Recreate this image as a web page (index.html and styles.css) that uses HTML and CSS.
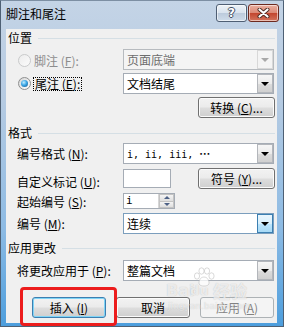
FILE: index.html
```html
<!DOCTYPE html>
<html lang="zh">
<head>
<meta charset="utf-8">
<title>脚注和尾注</title>
<link rel="stylesheet" href="styles.css">
</head>
<body>
<div class="window">
  <div class="titlebar">
    <span class="title">脚注和尾注</span>
    <div class="caption-btns">
      <div class="cbtn help"><span>?</span></div>
      <div class="cbtn close">
        <svg width="13" height="10" viewBox="0 0 13 10"><path d="M2.5 1.5 L10.5 8.5 M10.5 1.5 L2.5 8.5" stroke="#4a2a22" stroke-width="4" stroke-linecap="round"/><path d="M2.5 1.5 L10.5 8.5 M10.5 1.5 L2.5 8.5" stroke="#fff" stroke-width="2.2" stroke-linecap="round"/></svg>
      </div>
    </div>
  </div>
  <div class="client">
    <div class="group g1"><span>位置</span><i class="rule"></i></div>
    <div class="row r1">
      <div class="radio disabled lift1"><span class="rb off"></span><span>脚注 (<u>F</u>):</span></div>
      <div class="combo disabled"><span class="val">页面底端</span><span class="arrow"><i class="tri"></i></span></div>
    </div>
    <div class="row r2">
      <div class="radio"><span class="rb on"></span><span class="focus">尾注 (<u>E</u>):</span></div>
      <div class="combo"><span class="val">文档结尾</span><span class="arrow"><i class="tri"></i></span></div>
    </div>
    <div class="row r3">
      <span></span>
      <div class="btn btn-right">转换 (<u>C</u>)...</div>
    </div>

    <div class="group g2"><span>格式</span><i class="rule"></i></div>
    <div class="row r4">
      <span class="lbl">编号格式 (<u>N</u>):</span>
      <div class="combo"><span class="val mono">i, ii, iii, <span class="dots">…</span></span><span class="arrow"><i class="tri"></i></span></div>
    </div>
    <div class="row r5">
      <span class="lbl lift3">自定义标记 (<u>U</u>):</span>
      <div class="split">
        <div class="textbox"></div>
        <div class="btn sym">符号 (<u>Y</u>)...</div>
      </div>
    </div>
    <div class="row r6">
      <span class="lbl lift1">起始编号 (<u>S</u>):</span>
      <div class="spinner">
        <span class="val">i</span>
        <span class="spin">
          <span class="sbtn"><i class="up"></i></span>
          <span class="sbtn"><i class="down"></i></span>
        </span>
      </div>
    </div>
    <div class="row r7">
      <span class="lbl">编号 (<u>M</u>):</span>
      <div class="combo hot"><span class="val">连续</span><span class="arrow"><i class="tri"></i></span></div>
    </div>

    <div class="group g3"><span>应用更改</span><i class="rule"></i></div>
    <div class="row r8">
      <span class="lbl">将更改应用于 (<u>P</u>):</span>
      <div class="combo"><span class="val">整篇文档</span><span class="arrow"><i class="tri"></i></span></div>
    </div>

    <div class="actions">
      <div class="btn default">插入 (<u>I</u>)</div>
      <div class="btn">取消</div>
      <div class="btn disabled">应用 (<u>A</u>)</div>
    </div>
  </div>

  <div class="annot"></div>
  <div class="watermark">
    <svg class="paw" width="24" height="20" viewBox="0 0 24 20">
      <g fill="rgba(255,255,255,0.75)" stroke="rgba(150,150,150,0.35)" stroke-width="1">
        <ellipse cx="5" cy="9" rx="2.6" ry="3.2"/>
        <ellipse cx="9.5" cy="4" rx="2.6" ry="3.2"/>
        <ellipse cx="15" cy="4" rx="2.6" ry="3.2"/>
        <ellipse cx="19.5" cy="9" rx="2.6" ry="3.2"/>
        <path d="M12 10 C8 10 6 15 7.5 17.5 C9 19.5 15 19.5 16.5 17.5 C18 15 16 10 12 10 Z"/>
      </g>
    </svg>
    <span class="wm-bai">Bai</span><span class="wm-du">du</span><span class="wm-jy">经验</span>
    <span class="wm-url">jingyan.baidu.com</span>
  </div>
</div>
</body>
</html>
```

FILE: styles.css
```css
* { box-sizing: border-box; }

html, body {
  margin: 0;
  padding: 0;
}

body {
  font-family: "Noto Sans CJK SC", "Noto Sans", sans-serif;
  font-size: 12px;
  color: #000;
  background: #fff;
}

u { text-decoration: underline; text-underline-offset: 1px; }

.window {
  position: relative;
  width: 284px;
  height: 327px;
  border: 1px solid #4e6074;
  border-top-color: #7d8fa3;
  background: linear-gradient(#c4d4e6 0%, #b6cbe2 30%, #8dbbe4 70%, #4d9edd 100%);
  display: flex;
  flex-direction: column;
  overflow: hidden;
}

/* title bar */
.titlebar {
  height: 28px;
  flex: none;
  display: flex;
  justify-content: space-between;
  align-items: flex-start;
  padding: 0 4px 0 5px;
}

.title {
  margin-top: 7px;
  line-height: 12px;
  font-size: 12px;
  color: #000;
}

.caption-btns {
  display: flex;
  gap: 1px;
  margin-top: 3px;
}

.cbtn {
  width: 31px;
  height: 18px;
  border: 1px solid #4f5f74;
  border-radius: 3px;
  display: flex;
  align-items: center;
  justify-content: center;
  box-shadow: inset 0 0 0 1px rgba(255,255,255,0.55);
}

.help {
  background: linear-gradient(#edf2f7 0%, #d9e3ee 48%, #bccbdc 52%, #cfdcea 100%);
}

.help span {
  font-family: "DejaVu Sans", sans-serif;
  font-weight: bold;
  font-size: 12px;
  line-height: 12px;
  color: #fff;
  text-shadow: 1px 0 0 #3f4e62, -1px 0 0 #3f4e62, 0 1px 0 #3f4e62, 0 -1px 0 #3f4e62;
}

.close {
  border-color: #6d2a20;
  background: linear-gradient(#eab0a2 0%, #dc8a77 48%, #c3462f 52%, #d3745d 100%);
}

/* client area */
.client {
  flex: 1;
  margin: 0 6px 3px 5px;
  background: #f0f0f0;
  display: flex;
  flex-direction: column;
}

.group {
  display: flex;
  align-items: center;
  gap: 6px;
  height: 12px;
  line-height: 12px;
  margin: 0 2px 0 2px;
}

.group .rule {
  flex: 1;
  height: 1px;
  background: #d5dfe5;
}

.g1 { margin-top: 3px; }
.g2 { margin-top: 9px; }
.g3 { margin-top: 8px; }

.row {
  display: grid;
  grid-template-columns: 117px 151px;
  align-items: center;
  height: 21px;
}

.r1 { margin-top: 5px; }
.r2 { margin-top: 3px; }
.r3 { margin-top: 3px; }
.r4 { margin-top: 4px; }
.r5 { margin-top: 4px; height: 20px; }
.r6 { margin-top: 5px; height: 16px; }
.r7 { margin-top: 4px; }
.r8 { margin-top: 6px; }

.lbl {
  padding-left: 11px;
  line-height: 12px;
  white-space: nowrap;
}

.lift1 { padding-top: 2px; }
.lift3 { padding-top: 6px; }

/* radios */
.radio {
  display: flex;
  align-items: center;
  gap: 3px;
  padding-left: 12px;
  line-height: 12px;
  white-space: nowrap;
}

.radio.disabled { color: #8d8d8d; }

.rb {
  width: 13px;
  height: 13px;
  border-radius: 50%;
  display: flex;
  align-items: center;
  justify-content: center;
  flex: none;
}

.rb.off {
  border: 1px solid #c9cacb;
  background: linear-gradient(135deg, #ececec, #fbfbfb);
}

.rb.on {
  border: 1px solid #8e8f8f;
  background: linear-gradient(135deg, #d6d6d6, #ffffff);
}

.rb.on::after {
  content: "";
  width: 7px;
  height: 7px;
  border-radius: 50%;
  background: radial-gradient(circle at 40% 35%, #c6efff 0%, #3aa6e6 45%, #174f82 100%);
}

.focus {
  outline: 1px dotted #000;
  outline-offset: 0;
  padding: 0 1px;
}

/* combo boxes */
.combo {
  height: 21px;
  border: 1px solid #a5acb5;
  background: #fff;
  display: flex;
  align-items: center;
  justify-content: space-between;
  padding-left: 3px;
}

.combo .val {
  line-height: 12px;
  white-space: nowrap;
}

.mono {
  font-family: "DejaVu Sans Mono", monospace;
  font-size: 10px;
}

.mono .dots {
  font-family: "Noto Sans CJK SC", sans-serif;
  font-size: 11px;
  font-weight: bold;
}

.combo .arrow {
  width: 16px;
  height: 19px;
  border: 1px solid #b3b6bb;
  background: linear-gradient(#f6f6f6 0%, #ebebeb 50%, #dcdcdc 51%, #d0d0d0 100%);
  display: flex;
  align-items: center;
  justify-content: center;
}

.tri {
  width: 0;
  height: 0;
  border-left: 4px solid transparent;
  border-right: 4px solid transparent;
  border-top: 4px solid #000;
}

.combo.disabled {
  background: #f4f4f4;
  border-color: #b7bbbf;
}

.combo.disabled .val { color: #6d6d6d; }

.combo.disabled .arrow {
  background: #f4f4f4;
  border-color: #d8d8d8;
}

.combo.disabled .tri { border-top-color: #a8a8a8; }

.combo.hot { border-color: #7b9ebd; }

.combo.hot .arrow {
  border-color: #3c7fb1;
  background: linear-gradient(#eaf6fd 0%, #d9f0fc 50%, #bee6fd 51%, #a7d9f5 100%);
}

/* text box, spinner */
.split {
  display: flex;
  align-items: center;
  justify-content: space-between;
}

.textbox {
  width: 48px;
  height: 19px;
  border: 1px solid #a5acb5;
  background: #fff;
}

.spinner {
  width: 52px;
  height: 16px;
  border: 1px solid #a5acb5;
  background: #fff;
  display: flex;
  justify-content: space-between;
  align-items: stretch;
}

.spinner .val {
  padding-left: 2px;
  line-height: 14px;
  font-family: "DejaVu Sans Mono", monospace;
  font-size: 11px;
}

.spin {
  width: 16px;
  display: flex;
  flex-direction: column;
  border-left: 1px solid #d6d6d6;
}

.sbtn {
  flex: 1;
  display: flex;
  align-items: center;
  justify-content: center;
  background: linear-gradient(#f4f4f4, #dedede);
  border: 1px solid #c3c3c3;
}

.sbtn + .sbtn { border-top: none; }

.up, .down {
  width: 0;
  height: 0;
  border-left: 3px solid transparent;
  border-right: 3px solid transparent;
}

.up { border-bottom: 3px solid #4d6185; }
.down { border-top: 3px solid #4d6185; }

/* buttons */
.btn {
  height: 21px;
  border: 1px solid #707070;
  border-radius: 3px;
  background: linear-gradient(#f2f2f2 0%, #ebebeb 48%, #dddddd 52%, #cfcfcf 100%);
  box-shadow: inset 0 0 0 1px #fbfbfb;
  display: flex;
  align-items: center;
  justify-content: center;
  line-height: 12px;
  white-space: nowrap;
}

.btn-right {
  width: 77px;
  justify-self: end;
  margin-right: -1px;
}

.sym { width: 77px; margin-right: -1px; }

.actions {
  display: flex;
  gap: 10px;
  margin-top: 16px;
  padding-left: 26px;
}

.actions .btn { width: 74px; }

.btn.default {
  border-color: #3c7fb1;
  box-shadow: inset 0 0 0 1px #7fd4f6;
}

.btn.disabled {
  border-color: #adb2b5;
  background: #f4f4f4;
  box-shadow: none;
  color: #838383;
}

/* annotation overlay */
.annot {
  position: absolute;
  left: 19px;
  top: 286px;
  width: 97px;
  height: 39px;
  border: 3px solid #ec1c1c;
  border-radius: 4px;
}

/* watermark overlay */
.watermark {
  position: absolute;
  left: 162px;
  top: 264px;
  width: 100px;
  height: 50px;
  pointer-events: none;
}

.paw {
  position: absolute;
  left: 29px;
  top: 2px;
}

.wm-bai, .wm-du, .wm-jy {
  position: absolute;
  top: 18px;
  font-family: "DejaVu Sans", sans-serif;
  font-weight: bold;
  font-size: 16px;
  line-height: 16px;
  color: rgba(255,255,255,0.7);
  text-shadow: 0 0 1px rgba(120,120,120,0.45);
}

.wm-bai { left: 3px; }
.wm-du { left: 27px; font-size: 13px; }
.wm-jy {
  left: 50px;
  font-family: "Noto Sans CJK SC", sans-serif;
  font-size: 17px;
}

.wm-url {
  position: absolute;
  left: 5px;
  top: 36px;
  font-family: "DejaVu Sans", sans-serif;
  font-size: 9px;
  line-height: 10px;
  color: rgba(255,255,255,0.6);
  text-shadow: 0 0 1px rgba(120,120,120,0.4);
}
```
